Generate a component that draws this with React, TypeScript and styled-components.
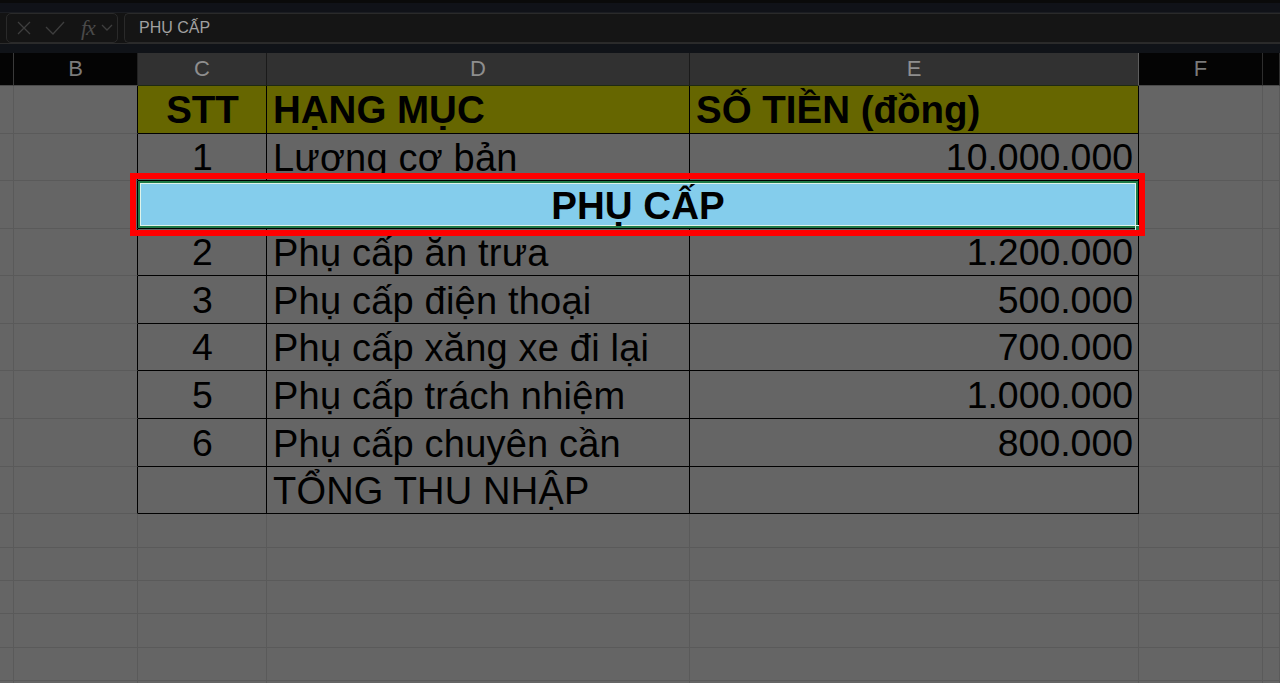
import React from "react";
import styled, { createGlobalStyle } from "styled-components";

const COLS = "14px 124px 129px 423px 449px 124px 1fr";
const GRID = "#5a5a5a";
const SHEET = "#656565";

const Global = createGlobalStyle`
  html, body { margin: 0; padding: 0; background: ${SHEET}; overflow: hidden; }
  body { font-family: "Liberation Sans", Arial, sans-serif; }
  * { box-sizing: border-box; }
`;

const Page = styled.div`
  width: 1280px;
  height: 683px;
  display: flex;
  flex-direction: column;
  overflow: hidden;
  background: ${SHEET};
  & > * { flex-shrink: 0; }
`;

const TitleStrip = styled.div`
  height: 13px;
  background: #101218;
  border-top: 3px solid #0a0a0a;
  border-bottom: 1px solid #1b1d22;
`;

const FormulaRow = styled.div`
  height: 31px;
  background: #131313;
  display: flex;
  gap: 6px;
  padding-left: 6px;
  border-bottom: 1px solid #2b2b2b;
`;

const ControlBox = styled.div`
  width: 112px;
  height: 30px;
  border: 1px solid #2a2a2a;
  border-radius: 5px;
  background: #141414;
  display: flex;
  align-items: center;
  padding: 0 0 0 9px;
  color: #3e3e3e;
`;

const IconSlot = styled.span<{ $ml: number }>`
  display: flex;
  align-items: center;
  margin-left: ${(p) => p.$ml}px;
`;

const Fx = styled.span`
  font-family: "Liberation Serif", serif;
  font-style: italic;
  font-size: 22px;
  color: #4a4a4a;
  margin-left: 16px;
  letter-spacing: -1px;
  line-height: 1;
`;

const FormulaInput = styled.div`
  flex: 1;
  height: 30px;
  border: 1px solid #2a2a2a;
  border-right: none;
  border-radius: 5px 0 0 5px;
  background: #151515;
  display: flex;
  align-items: center;
  padding-left: 14px;
  font-size: 16px;
  color: #a0a0a0;
`;

const Gap = styled.div`
  height: 9px;
  background: #101318;
`;

const HeaderRow = styled.div`
  display: grid;
  grid-template-columns: ${COLS};
  height: 33px;
`;

const ColHead = styled.div<{ $active?: boolean; $line?: string }>`
  background: ${(p) => (p.$active ? "#313131" : "#040404")};
  border-right: 1px solid ${(p) => p.$line || "#2e2e2e"};
  border-bottom: 1px solid ${(p) => (p.$active ? "#1e2a12" : "#4a4a4a")};
  display: flex;
  align-items: center;
  justify-content: center;
  font-size: 22px;
  color: ${(p) => (p.$active ? "#8e8e8e" : "#7a7a7a")};
`;

const Row = styled.div<{ $h: number }>`
  display: grid;
  grid-template-columns: ${COLS};
  height: ${(p) => p.$h}px;
`;

type CellProps = {
  $rb?: boolean;
  $bb?: boolean;
  $bg?: string;
  $align?: "left" | "center" | "right";
  $bold?: boolean;
  $wide?: boolean;
};

const Cell = styled.div<CellProps>`
  background: ${(p) => p.$bg || SHEET};
  border-right: 1px solid ${(p) => (p.$rb ? "#000" : GRID)};
  border-bottom: 1px solid ${(p) => (p.$bb ? "#000" : GRID)};
  display: flex;
  align-items: center;
  justify-content: ${(p) =>
    p.$align === "center" ? "center" : p.$align === "right" ? "flex-end" : "flex-start"};
  padding: 2px 5px 0 6px;
  font-size: ${(p) => (p.$bold ? "38.5px" : p.$wide ? "38px" : "37.4px")};
  font-weight: ${(p) => (p.$bold ? 700 : 400)};
  letter-spacing: ${(p) => (p.$wide ? "0.2px" : "0")};
  color: #000;
  white-space: nowrap;
  line-height: 1;
`;

const Merged = styled.div`
  grid-column: 3 / 6;
  position: relative;
  background: #84cdec;
  border-right: 1px solid #000;
  border-bottom: 1px solid #000;
  display: flex;
  align-items: center;
  justify-content: center;
  padding-top: 2px;
  font-size: 38.5px;
  font-weight: 700;
  color: #000;
  box-shadow: inset 0 0 0 2px #1f7a47, inset 0 0 0 3px #dff3ea;
`;

const Handle = styled.span`
  position: absolute;
  right: -3px;
  bottom: -3px;
  width: 6px;
  height: 6px;
  background: #1f7a47;
  border: 1px solid #dff3ea;
`;

const Annotation = styled.div`
  position: absolute;
  left: -8px;
  top: -8px;
  right: -7px;
  bottom: -8px;
  border: 6px solid #ff0000;
  pointer-events: none;
`;

type DataRow = { stt?: string; name: string; amount?: string; h: number };

const dataRows: DataRow[] = [
  { stt: "2", name: "Phụ cấp ăn trưa", amount: "1.200.000", h: 47 },
  { stt: "3", name: "Phụ cấp điện thoại", amount: "500.000", h: 48 },
  { stt: "4", name: "Phụ cấp xăng xe đi lại", amount: "700.000", h: 47 },
  { stt: "5", name: "Phụ cấp trách nhiệm", amount: "1.000.000", h: 48 },
  { stt: "6", name: "Phụ cấp chuyên cần", amount: "800.000", h: 48 },
  { name: "TỔNG THU NHẬP", h: 47 },
];

const emptyHeights = [34, 33, 33, 34, 33, 33];

const XIcon = () => (
  <svg width="14" height="14" viewBox="0 0 14 14" fill="none" stroke="currentColor" strokeWidth="1.3">
    <path d="M1 1 L13 13 M13 1 L1 13" />
  </svg>
);
const CheckIcon = () => (
  <svg width="20" height="14" viewBox="0 0 20 14" fill="none" stroke="currentColor" strokeWidth="1.3">
    <path d="M1 6 L8 13 L19 1" />
  </svg>
);
const Chevron = () => (
  <svg width="12" height="8" viewBox="0 0 12 8" fill="none" stroke="currentColor" strokeWidth="1.3">
    <path d="M1 1 L6 6 L11 1" />
  </svg>
);

const TableRow = ({ r }: { r: DataRow }) => (
  <Row $h={r.h}>
    <Cell />
    <Cell $rb />
    <Cell $rb $bb $align="center">{r.stt ?? ""}</Cell>
    <Cell $rb $bb $wide>{r.name}</Cell>
    <Cell $rb $bb $align="right">{r.amount ?? ""}</Cell>
    <Cell />
    <Cell />
  </Row>
);

export default function App() {
  return (
    <Page>
      <Global />
      <TitleStrip />
      <FormulaRow>
        <ControlBox>
          <IconSlot $ml={1}>
            <XIcon />
          </IconSlot>
          <IconSlot $ml={14}>
            <CheckIcon />
          </IconSlot>
          <Fx>fx</Fx>
          <IconSlot $ml={6}>
            <Chevron />
          </IconSlot>
        </ControlBox>
        <FormulaInput>PHỤ CẤP</FormulaInput>
      </FormulaRow>
      <Gap />
      <HeaderRow>
        <ColHead $line="#3a3a3a" />
        <ColHead $line="#222">B</ColHead>
        <ColHead $active $line="#1a1a1a">C</ColHead>
        <ColHead $active $line="#1a1a1a">D</ColHead>
        <ColHead $active $line="#5e5e5e">E</ColHead>
        <ColHead $line="#2e2e2e">F</ColHead>
        <ColHead />
      </HeaderRow>

      <Row $h={48}>
        <Cell />
        <Cell $rb />
        <Cell $rb $bb $bg="#666600" $align="center" $bold>STT</Cell>
        <Cell $rb $bb $bg="#666600" $bold>HẠNG MỤC</Cell>
        <Cell $rb $bb $bg="#666600" $bold>SỐ TIỀN (đồng)</Cell>
        <Cell />
        <Cell />
      </Row>

      <Row $h={47}>
        <Cell />
        <Cell $rb />
        <Cell $rb $bb $align="center">1</Cell>
        <Cell $rb $bb $wide>Lương cơ bản</Cell>
        <Cell $rb $bb $align="right">10.000.000</Cell>
        <Cell />
        <Cell />
      </Row>

      <Row $h={48}>
        <Cell />
        <Cell $rb />
        <Merged>
          PHỤ CẤP
          <Handle />
          <Annotation />
        </Merged>
        <Cell />
        <Cell />
      </Row>

      {dataRows.map((r, i) => (
        <TableRow key={i} r={r} />
      ))}

      {emptyHeights.map((h, i) => (
        <Row key={i} $h={h}>
          <Cell />
          <Cell />
          <Cell />
          <Cell />
          <Cell />
          <Cell />
          <Cell />
        </Row>
      ))}
    </Page>
  );
}
